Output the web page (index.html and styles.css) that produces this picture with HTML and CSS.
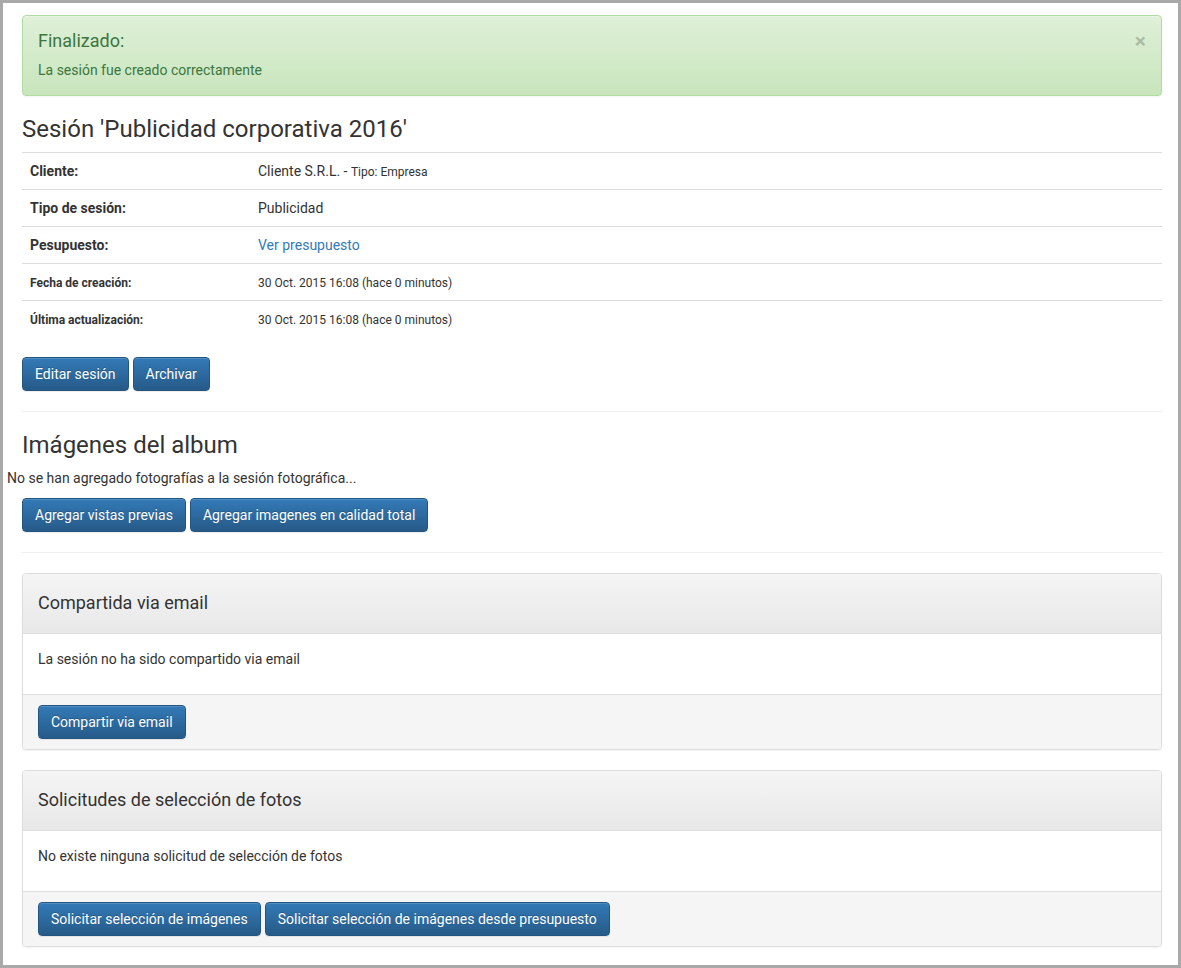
FILE: index.html
```html
<!DOCTYPE html>
<html lang="es">
<head>
<meta charset="utf-8">
<title>Sesión</title>
<link rel="stylesheet" href="styles.css">
</head>
<body>
<div class="frame">
  <div class="page">
    <div class="section">
      <div class="alert">
        <span class="close">&times;</span>
        <div class="alert-title">Finalizado:</div>
        <div class="alert-text">La sesión fue creado correctamente</div>
      </div>
      <h3 class="heading">Sesión 'Publicidad corporativa 2016'</h3>
      <table class="details">
        <tr><th>Cliente:</th><td>Cliente S.R.L. - <small>Tipo: Empresa</small></td></tr>
        <tr><th>Tipo de sesión:</th><td>Publicidad</td></tr>
        <tr><th>Pesupuesto:</th><td><a href="#" class="link">Ver presupuesto</a></td></tr>
        <tr class="small-row"><th>Fecha de creación:</th><td>30 Oct. 2015 16:08 (hace 0 minutos)</td></tr>
        <tr class="small-row"><th>Última actualización:</th><td>30 Oct. 2015 16:08 (hace 0 minutos)</td></tr>
      </table>
      <div class="btn-row">
        <button class="btn">Editar sesión</button>
        <button class="btn">Archivar</button>
      </div>
      <hr class="rule">
      <h2 class="heading">Imágenes del album</h2>
    </div>
    <p class="empty">No se han agregado fotografías a la sesión fotográfica...</p>
    <div class="section">
      <div class="btn-row">
        <button class="btn">Agregar vistas previas</button>
        <button class="btn">Agregar imagenes en calidad total</button>
      </div>
      <hr class="rule">
      <div class="panel">
        <div class="panel-heading">Compartida via email</div>
        <div class="panel-body"><p>La sesión no ha sido compartido via email</p></div>
        <div class="panel-footer">
          <div class="btn-row">
            <button class="btn">Compartir via email</button>
          </div>
        </div>
      </div>
      <div class="panel">
        <div class="panel-heading">Solicitudes de selección de fotos</div>
        <div class="panel-body"><p>No existe ninguna solicitud de selección de fotos</p></div>
        <div class="panel-footer">
          <div class="btn-row">
            <button class="btn">Solicitar selección de imágenes</button>
            <button class="btn">Solicitar selección de imágenes desde presupuesto</button>
          </div>
        </div>
      </div>
    </div>
  </div>
</div>
</body>
</html>
```
FILE: styles.css
```css
* { box-sizing: border-box; }
html, body { margin: 0; padding: 0; }
body {
  font-family: Roboto, "Liberation Sans", Arial, sans-serif;
  font-size: 14px;
  line-height: 20px;
  color: #333;
  background: #fff;
}
.frame {
  width: 1181px;
  height: 968px;
  border: 3px solid #a9a9a9;
  overflow: hidden;
  background: #fff;
}
.page {
  padding: 12px 1px 0 4px;
}
.section {
  padding: 0 15px;
}
.alert {
  position: relative;
  padding: 15px 35px 15px 15px;
  border: 1px solid #b2dba1;
  border-radius: 4px;
  background: linear-gradient(to bottom, #dff0d8 0%, #c8e5bc 100%);
  color: #3c763d;
  box-shadow: inset 0 1px 0 rgba(255,255,255,.25), 0 1px 2px rgba(0,0,0,.05);
  margin-bottom: 20px;
}
.close {
  position: absolute;
  top: 13px;
  right: 15px;
  font-size: 21px;
  font-weight: 700;
  line-height: 24px;
  color: #000;
  opacity: .2;
}
.alert-title {
  font-size: 18px;
  line-height: 20px;
  margin-bottom: 9px;
}
.alert-text {
  line-height: 20px;
}
.heading {
  font-size: 24px;
  line-height: 26px;
  font-weight: 400;
  margin: 0 0 10px;
  color: #333;
}
.details {
  width: 100%;
  border-collapse: collapse;
  margin-bottom: 19px;
}
.details th, .details td {
  border-top: 1px solid #ddd;
  padding: 8px;
  height: 37px;
  text-align: left;
  vertical-align: top;
  line-height: 20px;
}
.details th {
  width: 228px;
  font-weight: 700;
}
.details small { font-size: 12px; line-height: 1; }
.details .small-row th, .details .small-row td {
  font-size: 12px;
  padding-top: 9px;
  padding-bottom: 7px;
}
.link { color: #337ab7; text-decoration: none; }
.btn-row {
  display: flex;
  gap: 4px;
}
.btn {
  font-family: inherit;
  font-size: 14px;
  line-height: 20px;
  padding: 6px 12px;
  color: #fff;
  border: 1px solid #245580;
  border-radius: 4px;
  background: linear-gradient(to bottom, #337ab7 0%, #265a88 100%);
  text-shadow: 0 -1px 0 rgba(0,0,0,.2);
  box-shadow: inset 0 1px 0 rgba(255,255,255,.15), 0 1px 1px rgba(0,0,0,.075);
  cursor: pointer;
}
.rule {
  border: 0;
  border-top: 1px solid #eee;
  margin: 20px 0;
  height: 0;
}
.empty {
  margin: 0 0 10px;
}
.panel {
  border: 1px solid #ddd;
  border-radius: 4px;
  margin-bottom: 20px;
  box-shadow: 0 1px 2px rgba(0,0,0,.05);
  background: #fff;
  overflow: hidden;
}
.panel-heading {
  padding: 19px 15px 20px;
  font-size: 18px;
  line-height: 20px;
  border-bottom: 1px solid #ddd;
  background: linear-gradient(to bottom, #f5f5f5 0%, #e8e8e8 100%);
  color: #333;
}
.panel-body {
  padding: 15px;
}
.panel-body p { margin: 0 0 10px; }
.panel-footer {
  padding: 10px 15px;
  background: #f5f5f5;
  border-top: 1px solid #ddd;
}
```
